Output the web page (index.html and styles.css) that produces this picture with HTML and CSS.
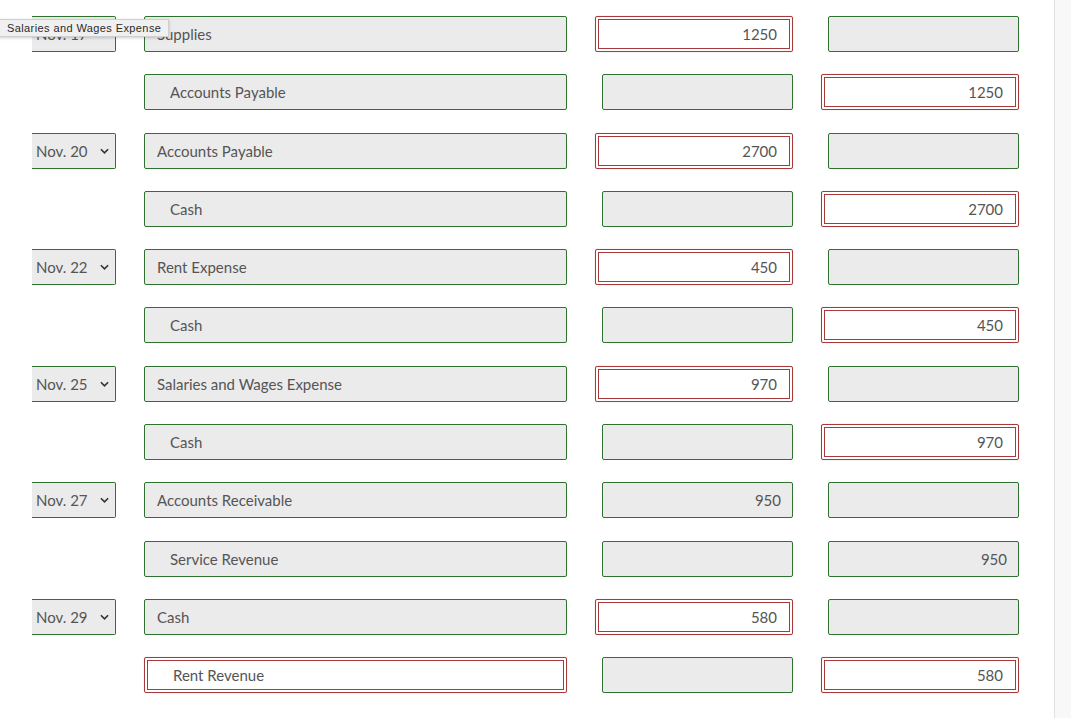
FILE: index.html
```html
<!DOCTYPE html>
<html lang="en">
<head>
    <meta charset="UTF-8">
    <meta name="viewport" content="width=device-width, initial-scale=1.0">
    <title>Journal Entries</title>
    <link rel="stylesheet" href="styles.css">
</head>
<body>
<div class="page">
    <div class="journal">
        <!-- Nov. 17 -->
        <div class="entry-row">
            <div class="date-cell">
                <div class="date-select">Nov. 17
                    <svg class="chevron" viewBox="0 0 10 6"><path d="M1 1l4 4 4-4"/></svg>
                </div>
            </div>
            <div class="account">Supplies</div>
            <div class="amount-wrong"><div class="amount-inner">1250</div></div>
            <div class="amount"></div>
        </div>
        <div class="entry-row">
            <div class="date-cell"></div>
            <div class="account indent">Accounts Payable</div>
            <div class="amount"></div>
            <div class="amount-wrong"><div class="amount-inner">1250</div></div>
        </div>

        <!-- Nov. 20 -->
        <div class="entry-row">
            <div class="date-cell">
                <div class="date-select">Nov. 20
                    <svg class="chevron" viewBox="0 0 10 6"><path d="M1 1l4 4 4-4"/></svg>
                </div>
            </div>
            <div class="account">Accounts Payable</div>
            <div class="amount-wrong"><div class="amount-inner">2700</div></div>
            <div class="amount"></div>
        </div>
        <div class="entry-row">
            <div class="date-cell"></div>
            <div class="account indent">Cash</div>
            <div class="amount"></div>
            <div class="amount-wrong"><div class="amount-inner">2700</div></div>
        </div>

        <!-- Nov. 22 -->
        <div class="entry-row">
            <div class="date-cell">
                <div class="date-select">Nov. 22
                    <svg class="chevron" viewBox="0 0 10 6"><path d="M1 1l4 4 4-4"/></svg>
                </div>
            </div>
            <div class="account">Rent Expense</div>
            <div class="amount-wrong"><div class="amount-inner">450</div></div>
            <div class="amount"></div>
        </div>
        <div class="entry-row">
            <div class="date-cell"></div>
            <div class="account indent">Cash</div>
            <div class="amount"></div>
            <div class="amount-wrong"><div class="amount-inner">450</div></div>
        </div>

        <!-- Nov. 25 -->
        <div class="entry-row">
            <div class="date-cell">
                <div class="date-select">Nov. 25
                    <svg class="chevron" viewBox="0 0 10 6"><path d="M1 1l4 4 4-4"/></svg>
                </div>
            </div>
            <div class="account">Salaries and Wages Expense</div>
            <div class="amount-wrong"><div class="amount-inner">970</div></div>
            <div class="amount"></div>
        </div>
        <div class="entry-row">
            <div class="date-cell"></div>
            <div class="account indent">Cash</div>
            <div class="amount"></div>
            <div class="amount-wrong"><div class="amount-inner">970</div></div>
        </div>

        <!-- Nov. 27 -->
        <div class="entry-row">
            <div class="date-cell">
                <div class="date-select">Nov. 27
                    <svg class="chevron" viewBox="0 0 10 6"><path d="M1 1l4 4 4-4"/></svg>
                </div>
            </div>
            <div class="account">Accounts Receivable</div>
            <div class="amount">950</div>
            <div class="amount"></div>
        </div>
        <div class="entry-row">
            <div class="date-cell"></div>
            <div class="account indent">Service Revenue</div>
            <div class="amount"></div>
            <div class="amount">950</div>
        </div>

        <!-- Nov. 29 -->
        <div class="entry-row">
            <div class="date-cell">
                <div class="date-select">Nov. 29
                    <svg class="chevron" viewBox="0 0 10 6"><path d="M1 1l4 4 4-4"/></svg>
                </div>
            </div>
            <div class="account">Cash</div>
            <div class="amount-wrong"><div class="amount-inner">580</div></div>
            <div class="amount"></div>
        </div>
        <div class="entry-row">
            <div class="date-cell"></div>
            <div class="account-wrong"><div class="account-inner">Rent Revenue</div></div>
            <div class="amount"></div>
            <div class="amount-wrong"><div class="amount-inner">580</div></div>
        </div>

        <!-- hover tooltip from the first select -->
        <div class="tooltip">Salaries and Wages Expense</div>
    </div>
    <div class="scrollbar"></div>
</div>
</body>
</html>
```

FILE: styles.css
```css
body {
    margin: 0;
    background: #fff;
    font-family: Lato, "Open Sans", sans-serif;
    font-size: 15px;
    color: #555;
}

.page {
    display: flex;
    height: 718px;
    overflow: hidden;
}

.journal {
    position: relative;
    flex: 1;
    padding: 16px 0 0 32px;
    display: flex;
    flex-direction: column;
    gap: 22.3px;
}

.scrollbar {
    width: 17px;
    background: #f8f8f8;
    border-left: 1px solid #e2e2e2;
}

.entry-row {
    display: flex;
    height: 36px;
}

.date-cell {
    width: 84px;
    margin-right: 28px;
}

.date-select {
    height: 36px;
    box-sizing: border-box;
    display: flex;
    align-items: center;
    padding-left: 4px;
    background: #ebebeb;
    border: 1px solid #2f722f;
    border-left: none;
    border-radius: 0 2px 2px 0;
}

.chevron {
    width: 9px;
    height: 6px;
    margin-left: auto;
    margin-right: 6px;
    fill: none;
    stroke: #333;
    stroke-width: 1.8;
}

.account,
.amount {
    box-sizing: border-box;
    height: 36px;
    background: #ebebeb;
    border: 1px solid #2f722f;
    border-radius: 2px;
    display: flex;
    align-items: center;
}

.account {
    width: 423px;
    margin-right: 35px;
    padding-left: 12px;
}

.account.indent {
    padding-left: 25px;
}

.amount {
    width: 191px;
    margin-right: 35px;
    justify-content: flex-end;
    padding-right: 11px;
}

.amount-wrong,
.account-wrong {
    box-sizing: border-box;
    height: 36px;
    padding: 2px;
    background: #fff;
    border: 1px solid #a83a3a;
    border-radius: 2px;
    box-shadow: 0 0 1px rgba(168, 58, 58, 0.4);
}

.amount-wrong {
    width: 198px;
    margin-left: -7px;
    margin-right: 35px;
}

.account-wrong {
    width: 423px;
    margin-right: 35px;
}

.amount-inner,
.account-inner {
    height: 100%;
    box-sizing: border-box;
    border: 1px solid #a83a3a;
    display: flex;
    align-items: center;
}

.amount-inner {
    justify-content: flex-end;
    padding-right: 12px;
}

.account-inner {
    padding-left: 25px;
}

.tooltip {
    position: absolute;
    left: -1px;
    top: 19px;
    height: 18px;
    box-sizing: border-box;
    padding: 0 7px;
    display: flex;
    align-items: center;
    font-family: "Liberation Sans", Arial, sans-serif;
    font-size: 11px;
    letter-spacing: 0.4px;
    color: #2a2a2a;
    background: #f0f0f0;
    border: 1px solid #cfcfcf;
    box-shadow: 0 1px 3px rgba(0, 0, 0, 0.2);
}
```
